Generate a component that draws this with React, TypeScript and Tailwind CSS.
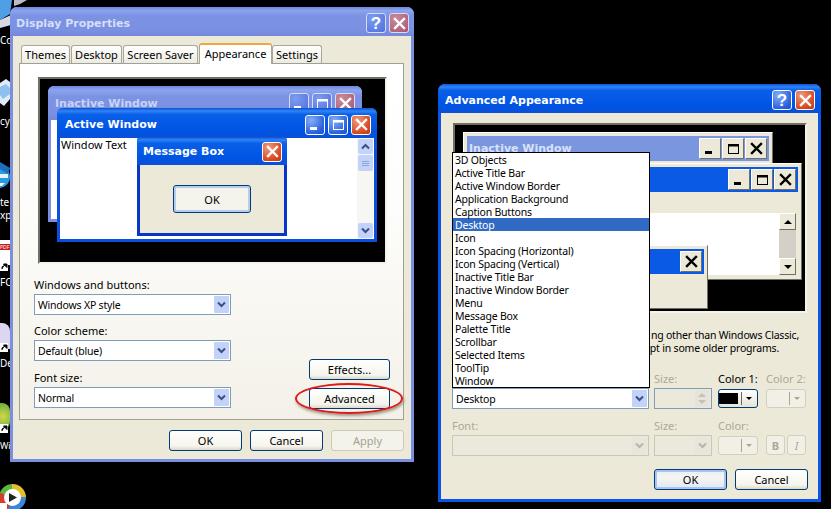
import React from "react";

const FONT = "font-['Noto_Sans',sans-serif] text-[11px] leading-[13px]";
const TIGHT = "text-[10.5px] tracking-[-0.2px]";
const TITLE = "font-['DejaVu_Sans',sans-serif] font-bold text-[11px] leading-[14px]";
const ACTIVE_BAR = "bg-[linear-gradient(180deg,#0a4fd4_0%,#2f85f5_10%,#0a5fe8_22%,#0054e3_75%,#0a50d8_100%)]";
const INACTIVE_BAR = "bg-[linear-gradient(180deg,#7186dc_0%,#8ba4ee_12%,#7c93e4_30%,#7a90e2_80%,#7488dc_100%)]";

function Glyph({ kind, color = "white" }: { kind: "x" | "min" | "max" | "help"; color?: string }) {
  if (kind === "x")
    return (
      <svg width="13" height="13" viewBox="0 0 13 13">
        <path d="M2 2 L11 11 M11 2 L2 11" stroke={color} strokeWidth="2.4" strokeLinecap="square" fill="none" />
      </svg>
    );
  if (kind === "min")
    return (
      <svg width="13" height="13" viewBox="0 0 13 13">
        <rect x="1" y="9" width="7" height="3" fill={color} />
      </svg>
    );
  if (kind === "max")
    return (
      <svg width="13" height="13" viewBox="0 0 13 13">
        <rect x="1.5" y="2.5" width="10" height="9" fill="none" stroke={color} strokeWidth="1" />
        <rect x="1" y="2" width="11" height="2.5" fill={color} />
      </svg>
    );
  return <span className="font-['Liberation_Sans',sans-serif] font-bold text-[17px] leading-none text-white">?</span>;
}

function CapBtn({ kind, red, faded }: { kind: "x" | "min" | "max" | "help"; red?: boolean; faded?: boolean }) {
  const cls = red
    ? faded
      ? "bg-[radial-gradient(circle_at_30%_25%,#c98b98,#a8566f)] border-[#d8dcf4]"
      : "bg-[radial-gradient(circle_at_30%_25%,#ee9a7c,#d8461c_70%,#c23a12)] border-white"
    : faded
      ? "bg-[radial-gradient(circle_at_30%_25%,#7d9cf0,#4f6fdc)] border-[#d8dcf4]"
      : "bg-[radial-gradient(circle_at_30%_25%,#86aef6,#2a62de_70%,#1c50cc)] border-white";
  return (
    <div className={`w-[20px] h-[20px] rounded-[3px] border flex items-center justify-center shrink-0 ${cls}`}>
      <Glyph kind={kind} />
    </div>
  );
}

function Btn({ children, w = "w-[73px]", disabled, focus }: { children: React.ReactNode; w?: string; disabled?: boolean; focus?: boolean }) {
  const cls = disabled
    ? "border-[#cdcab9] text-[#a5a292] bg-[#f4f3ea]"
    : focus
      ? "border-[#003c74] text-black bg-[linear-gradient(180deg,#e6eefc_0%,#f6f5ef_40%,#dfe6f6_100%)] shadow-[inset_0_0_0_2px_#a9c4f0]"
      : "border-[#003c74] text-black bg-[linear-gradient(180deg,#ffffff_0%,#f5f4ec_80%,#dcd8ca_100%)]";
  return <div className={`${w} h-[21px] shrink-0 rounded-[3px] border flex items-center justify-center ${cls}`}>{children}</div>;
}

function Chevron({ disabled }: { disabled?: boolean }) {
  return (
    <div className={`w-[15px] h-[17px] shrink-0 flex items-center justify-center rounded-[1px] ${disabled ? "bg-[#e8e6da]" : "bg-[#c3d2f8]"}`}>
      <svg width="9" height="7" viewBox="0 0 9 7">
        <path d="M1 1.5 L4.5 5 L8 1.5" fill="none" stroke={disabled ? "#b8b5a6" : "#3a4f86"} strokeWidth="2" />
      </svg>
    </div>
  );
}

function Select({ value, w = "w-[197px]", disabled }: { value?: string; w?: string; disabled?: boolean }) {
  return (
    <div className={`${w} h-[21px] border flex items-center justify-between pl-[3px] pr-[1px] ${disabled ? "border-[#c9c7b8] bg-[#ebe8dc]" : "border-[#7f9db9] bg-white"}`}>
      <span className={`text-black pt-[2px] ${TIGHT}`}>{value}</span>
      <Chevron disabled={disabled} />
    </div>
  );
}

function ColorBtn({ swatch, disabled }: { swatch?: boolean; disabled?: boolean }) {
  return (
    <div className={`w-[40px] h-[19px] rounded-[3px] border flex items-center justify-end gap-[2px] pr-[3px] ${disabled ? "border-[#d2cfbf] bg-[#f2f0e6]" : "border-[#003c74] bg-[linear-gradient(180deg,#ffffff,#e6e3d6)]"}`}>
      {swatch && <div className="w-[21px] h-[11px] bg-black mr-[1px]" />}
      <div className={`w-px h-[13px] ${disabled ? "bg-[#a8a596]" : "bg-[#6b6a60]"}`} />
      <div className={`w-0 h-0 border-l-[3px] border-r-[3px] border-t-[3px] border-l-transparent border-r-transparent mx-[2px] ${disabled ? "border-t-[#a8a596]" : "border-t-black"}`} />
    </div>
  );
}

function ClassicBtn({ kind }: { kind: "x" | "min" | "max" }) {
  return (
    <div className="w-[22px] h-[21px] bg-[#ece9d8] border border-t-white border-l-white border-r-[#716f64] border-b-[#716f64] flex items-center justify-center">
      <Glyph kind={kind} color="black" />
    </div>
  );
}

function ShortcutArrow({ top }: { top: string }) {
  return (
    <div className={`absolute left-0 ${top} w-[8px] h-[9px] bg-white flex items-center justify-center`}>
      <svg width="7" height="7" viewBox="0 0 7 7"><path d="M1 6 L1 4 L4 2 M2.5 1 L6 1 L6 4.5 Z" fill="black" stroke="black" strokeWidth="1" /></svg>
    </div>
  );
}

function DesktopBits() {
  return (
    <div className="absolute left-0 top-0 w-[30px] h-[509px] overflow-hidden font-['Noto_Sans',sans-serif] text-[10px] leading-[13px] text-white">
      <svg className="absolute left-0 top-0" width="28" height="28" viewBox="0 0 28 28">
        <path d="M0 0 H12 L10 14 L0 20 Z" fill="#4f9fe6" />
        <path d="M14 0 H27 L20 4 L14 6 Z" fill="#b9bcc8" />
        <path d="M0 20 L11 15 V25 L0 28 Z" fill="#d8dae4" />
      </svg>
      <span className="absolute left-0 top-[34px]">Co</span>
      <svg className="absolute left-0 top-[79px]" width="10" height="28" viewBox="0 0 10 28">
        <path d="M0 4 L6 0 L10 3 V20 L4 27 L0 24 Z" fill="#dfeafa" />
        <path d="M0 8 L6 5 L10 9 V15 L3 20 L0 16 Z" fill="#8fc0ee" />
      </svg>
      <span className="absolute left-0 top-[115px]">cy</span>
      <svg className="absolute left-0 top-[162px]" width="10" height="30" viewBox="0 0 10 30">
        <circle cx="-1" cy="15" r="11" fill="#2a9ae0" />
        <path d="M0 0 L10 6 L8 12 L0 7 Z" fill="#1c6fc0" />
        <path d="M0 12 H8 V16 H0 Z M0 21 H5 L2 24 H0 Z" fill="#e8f4fc" />
      </svg>
      <span className="absolute left-0 top-[196px]">te</span>
      <span className="absolute left-0 top-[209px]">xp</span>
      <div className="absolute left-0 top-[240px] w-[10px] h-[25px] bg-white" />
      <div className="absolute left-0 top-[244px] w-[10px] h-[6px] bg-[#c81c1c] text-[5px] leading-[6px] overflow-hidden">PDF</div>
      <ShortcutArrow top="top-[262px]" />
      <span className="absolute left-0 top-[276px]">FC</span>
      <div className="absolute left-0 top-[323px] w-[10px] h-[26px] bg-[#dcd6f0] rounded-tr-[8px]" />
      <ShortcutArrow top="top-[343px]" />
      <span className="absolute left-0 top-[357px]">De</span>
      <div className="absolute left-0 top-[403px] w-[10px] h-[27px] bg-[radial-gradient(circle_at_30%_50%,#d4d84c,#5aa83c)] rounded-r-[8px]" />
      <ShortcutArrow top="top-[424px]" />
      <span className="absolute left-0 top-[439px] text-[9px]">Wi</span>
      <div className="absolute left-[-1px] top-[484px] w-[27px] h-[27px] rounded-full bg-[conic-gradient(#e4c02c_0deg,#e4c02c_90deg,#3a86dc_90deg,#3a86dc_200deg,#d83c2c_200deg,#d83c2c_290deg,#5cb83c_290deg)] flex items-center justify-center">
        <div className="w-[17px] h-[17px] rounded-full bg-white flex items-center justify-center">
          <svg width="11" height="11" viewBox="0 0 11 11"><path d="M2 1 L10 5.5 L2 10 Z" fill="#222" /></svg>
        </div>
      </div>
      <div className="absolute left-0 top-[503px] w-[7px] h-[6px] bg-white" />
    </div>
  );
}

function DisplayProperties() {
  const tabs = ["Themes", "Desktop", "Screen Saver"];
  return (
    <div className="absolute left-[10px] top-[7px] w-[404px] h-[455px] rounded-t-[7px] border-[3px] border-t-0 border-[#7b8fe0] bg-[#ece9d8] flex flex-col">
      <div className={`-mx-[3px] h-[29px] pt-[3px] rounded-t-[7px] flex items-center justify-between pl-[6px] pr-[5px] shrink-0 ${INACTIVE_BAR}`}>
        <span className={`${TITLE} text-[#d6def8] pt-[1px]`}>Display Properties</span>
        <div className="flex gap-[3px]">
          <CapBtn kind="help" faded />
          <CapBtn kind="x" red faded />
        </div>
      </div>
      <div className="flex items-end pl-[8px] h-[27px] shrink-0">
        {tabs.map((t, i) => (
          <div key={t} className={`h-[18px] border border-b-0 border-[#a8a79a] rounded-t-[3px] bg-[linear-gradient(180deg,#ffffff,#ecebe2)] flex items-center justify-center text-black mr-[1px] ${i === 0 ? "w-[49px]" : i === 1 ? "w-[51px]" : "w-[75px]"}`}>
            {t}
          </div>
        ))}
        <div className="w-[73px] h-[21px] border border-b-0 border-[#a8a79a] border-t-[2px] border-t-[#f0a83c] rounded-t-[3px] bg-white flex items-center justify-center text-black -mb-px relative pb-[2px]">
          Appearance
        </div>
        <div className="w-[50px] h-[18px] border border-b-0 border-[#a8a79a] rounded-t-[3px] bg-[linear-gradient(180deg,#ffffff,#ecebe2)] flex items-center justify-center text-black">
          Settings
        </div>
      </div>
      <div className="ml-[6px] w-[385px] h-[357px] border border-[#a0a094] bg-[linear-gradient(180deg,#ffffff_0%,#fdfdfb_40%,#f3f1e8_100%)] pt-[13px] pl-[18px] shrink-0">
        <div className="relative w-[349px] h-[187px] bg-black border-2 border-t-[#716f64] border-l-[#716f64] border-r-[#f5f3ea] border-b-[#f5f3ea] overflow-hidden">
          <div className="absolute left-[8px] top-[7px] w-[314px] h-[136px] rounded-t-[6px] border-[3px] border-t-0 border-[#7b8fe0] bg-white">
            <div className={`-mx-[3px] h-[34px] rounded-t-[6px] flex items-center justify-between pl-[7px] pr-[7px] ${INACTIVE_BAR}`}>
              <span className={`${TITLE} text-[#c8d4f6] pt-[1px]`}>Inactive Window</span>
              <div className="flex gap-[3px]">
                <CapBtn kind="min" faded />
                <CapBtn kind="max" faded />
                <CapBtn kind="x" red faded />
              </div>
            </div>
          </div>
          <div className="absolute left-[17px] top-[29px] w-[320px] h-[134px] rounded-t-[6px] border-[3px] border-t-0 border-[#0a4fe0] bg-white flex flex-col">
            <div className={`-mx-[3px] h-[30px] pt-[3px] rounded-t-[6px] flex items-center justify-between pl-[8px] pr-[6px] shrink-0 ${ACTIVE_BAR}`}>
              <span className={`${TITLE} text-white pt-[1px]`}>Active Window</span>
              <div className="flex gap-[3px]">
                <CapBtn kind="min" />
                <CapBtn kind="max" />
                <CapBtn kind="x" red />
              </div>
            </div>
            <div className="flex flex-1 justify-between">
              <span className="text-black pl-px">Window Text</span>
              <div className="w-[16px] bg-[#f6f6f2] flex flex-col items-center mr-px pt-px pb-px">
                <div className="w-[15px] h-[15px] bg-[#c3d2f8] rounded-[2px] flex items-center justify-center">
                  <svg width="9" height="7" viewBox="0 0 9 7"><path d="M1 5.5 L4.5 2 L8 5.5" fill="none" stroke="#3a4f86" strokeWidth="2" /></svg>
                </div>
                <div className="w-[15px] h-[16px] bg-[#c3d2f8] rounded-[2px] mt-px flex flex-col items-center justify-center gap-px">
                  <div className="w-[7px] h-px bg-[#8ea4dc]" /><div className="w-[7px] h-px bg-[#8ea4dc]" /><div className="w-[7px] h-px bg-[#8ea4dc]" />
                </div>
                <div className="flex-1" />
                <div className="w-[15px] h-[15px] bg-[#c3d2f8] rounded-[2px] flex items-center justify-center">
                  <svg width="9" height="7" viewBox="0 0 9 7"><path d="M1 1.5 L4.5 5 L8 1.5" fill="none" stroke="#3a4f86" strokeWidth="2" /></svg>
                </div>
              </div>
            </div>
          </div>
          <div className="absolute left-[97px] top-[58px] w-[150px] h-[99px] rounded-t-[4px] border-[3px] border-t-0 border-[#0a35c8] bg-[#ece9d8] flex flex-col">
            <div className={`-mx-[3px] h-[28px] pt-[1px] rounded-t-[4px] flex items-center justify-between pl-[6px] pr-[5px] shrink-0 ${ACTIVE_BAR}`}>
              <span className={`${TITLE} text-white pt-[1px]`}>Message Box</span>
              <CapBtn kind="x" red />
            </div>
            <div className="flex-1 flex items-center justify-center">
              <div className="w-[78px] h-[28px] rounded-[3px] border border-[#003c74] shadow-[inset_0_0_0_2px_#b6ccf0] bg-[#f4f3ec] flex items-center justify-center text-black">OK</div>
            </div>
          </div>
        </div>
        <div className="flex mt-[16px] -ml-[4px] w-[356px] justify-between">
          <div className="flex flex-col">
            <span className="text-black h-[14px] leading-[9px]">Windows and buttons:</span>
            <Select value="Windows XP style" />
            <span className="text-black h-[14px] mt-[11px] leading-[9px]">Color scheme:</span>
            <Select value="Default (blue)" />
            <span className="text-black h-[14px] mt-[12px] leading-[9px]">Font size:</span>
            <Select value="Normal" />
          </div>
          <div className="flex flex-col justify-end gap-[8px] -mb-[1px]">
            <Btn w="w-[81px]">Effects...</Btn>
            <div className="relative">
              <Btn w="w-[81px]">Advanced</Btn>
              <div className="absolute left-[-14px] top-[-5px] w-[108px] h-[31px] rounded-[50%] border-2 border-[#e01818] shadow-[1px_2px_3px_#9b9888]" />
            </div>
          </div>
        </div>
      </div>
      <div className="flex justify-end gap-[8px] pr-[7px] pt-[10px]">
        <Btn>OK</Btn>
        <Btn>Cancel</Btn>
        <Btn disabled>Apply</Btn>
      </div>
    </div>
  );
}

const ITEMS = ["3D Objects", "Active Title Bar", "Active Window Border", "Application Background", "Caption Buttons", "Desktop", "Icon", "Icon Spacing (Horizontal)", "Icon Spacing (Vertical)", "Inactive Title Bar", "Inactive Window Border", "Menu", "Message Box", "Palette Title", "Scrollbar", "Selected Items", "ToolTip", "Window"];

function AdvancedAppearance() {
  return (
    <div className="absolute left-[438px] top-[84px] w-[383px] h-[418px] rounded-t-[7px] border-[3px] border-t-0 border-[#0a55e8] bg-[#ece9d8] flex flex-col">
      <div className={`-mx-[3px] h-[29px] pt-[3px] rounded-t-[7px] flex items-center justify-between pl-[7px] pr-[6px] shrink-0 ${ACTIVE_BAR}`}>
        <span className={`${TITLE} text-white pt-[1px]`}>Advanced Appearance</span>
        <div className="flex gap-[3px]">
          <CapBtn kind="help" />
          <CapBtn kind="x" red />
        </div>
      </div>
      <div className="relative px-[11px] pt-[10px] flex-1 flex flex-col">
        <div className="relative w-[354px] h-[190px] ml-[1px] shrink-0 bg-black border-2 border-t-[#716f64] border-l-[#716f64] border-r-[#f5f3ea] border-b-[#f5f3ea] overflow-hidden">
          <div className="absolute left-[8px] top-[7px] w-[310px] h-[120px] bg-[#ece9d8] border border-t-white border-l-white border-r-[#716f64] border-b-[#716f64] p-[3px]">
            <div className="h-[25px] bg-[#7a96df] flex items-center justify-between pl-[2px] pr-[2px]">
              <span className={`${TITLE} text-[#d8e2f8]`}>Inactive Window</span>
              <div className="flex gap-[1px]"><ClassicBtn kind="min" /><ClassicBtn kind="max" /><ClassicBtn kind="x" /></div>
            </div>
          </div>
          <div className="absolute left-[30px] top-[38px] w-[317px] h-[117px] bg-[#ece9d8] border border-t-white border-l-white border-r-[#716f64] border-b-[#716f64] p-[3px]">
            <div className="h-[25px] bg-[#0a5ae6] flex items-center justify-end pr-[2px]">
              <div className="flex gap-[1px]"><ClassicBtn kind="min" /><ClassicBtn kind="max" /><ClassicBtn kind="x" /></div>
            </div>
            <div className="mt-[21px] mr-[2px] h-[62px] bg-white flex justify-end">
              <div className="w-[17px] h-full bg-[#d4d0c8] flex flex-col justify-between">
                <div className="h-[17px] bg-[#ece9d8] border border-t-white border-l-white border-r-[#716f64] border-b-[#716f64] flex items-center justify-center">
                  <div className="w-0 h-0 border-l-[4px] border-r-[4px] border-b-[4px] border-l-transparent border-r-transparent border-b-black" />
                </div>
                <div className="h-[17px] bg-[#ece9d8] border border-t-white border-l-white border-r-[#716f64] border-b-[#716f64] flex items-center justify-center">
                  <div className="w-0 h-0 border-l-[4px] border-r-[4px] border-t-[4px] border-l-transparent border-r-transparent border-t-black" />
                </div>
              </div>
            </div>
          </div>
          <div className="absolute left-[100px] top-[120px] w-[153px] h-[64px] bg-[#ece9d8] border border-t-white border-l-white border-r-[#716f64] border-b-[#716f64] p-[3px]">
            <div className="h-[25px] bg-[#0a5ae6] flex items-center justify-end pr-[2px]"><ClassicBtn kind="x" /></div>
          </div>
        </div>
        <div className={`mt-[16px] text-black whitespace-nowrap flex justify-end pr-[8px] ${TIGHT}`}>ng other than Windows Classic,</div>
        <div className={`text-black whitespace-nowrap flex justify-end pr-[28px] ${TIGHT}`}>ept in some older programs.</div>

        <div className="flex mt-[33px] gap-[5px]">
          <div className="w-[197px]">
            <Select value="Desktop" />
          </div>
          <div className="w-[58px] -mt-[16px]">
            <div className="h-[13px] text-[#aca899]">Size:</div>
            <div className="mt-[3px] h-[21px] border border-[#7f9db9] bg-[#ebe8dc] flex items-center justify-end pr-[2px]">
              <div className="w-[14px] h-[17px] bg-[#e6e4da] flex flex-col items-center justify-center gap-[3px]">
                <div className="w-0 h-0 border-l-[4px] border-r-[4px] border-b-[4px] border-l-transparent border-r-transparent border-b-[#c5c2b4]" />
                <div className="w-0 h-0 border-l-[4px] border-r-[4px] border-t-[4px] border-l-transparent border-r-transparent border-t-[#c5c2b4]" />
              </div>
            </div>
          </div>
          <div className="w-[43px] ml-[1px] -mt-[16px]">
            <div className="h-[13px] text-black whitespace-nowrap">Color 1:</div>
            <div className="mt-[4px]"><ColorBtn swatch /></div>
          </div>
          <div className="w-[41px] -mt-[16px]">
            <div className="h-[13px] text-[#aca899] whitespace-nowrap">Color 2:</div>
            <div className="mt-[4px]"><ColorBtn disabled /></div>
          </div>
        </div>

        <div className="flex mt-[10px] gap-[5px]">
          <div className="w-[197px]">
            <div className="h-[13px] text-[#aca899]">Font:</div>
            <div className="mt-[3px]"><Select disabled /></div>
          </div>
          <div className="w-[58px]">
            <div className="h-[13px] text-[#aca899]">Size:</div>
            <div className="mt-[3px]"><Select disabled w="w-[58px]" /></div>
          </div>
          <div className="w-[43px] ml-[1px]">
            <div className="h-[13px] text-[#aca899]">Color:</div>
            <div className="mt-[4px]"><ColorBtn disabled /></div>
          </div>
          <div className="w-[41px] flex gap-[2px] pt-[16px]">
            <div className="w-[19px] h-[20px] shrink-0 rounded-[3px] border border-[#d2cfbf] bg-[#f2f0e6] flex items-center justify-center font-bold text-[#aca899]">B</div>
            <div className="w-[19px] h-[20px] shrink-0 rounded-[3px] border border-[#d2cfbf] bg-[#f2f0e6] flex items-center justify-center italic text-[#aca899]">I</div>
          </div>
        </div>

        <div className="flex justify-end gap-[8px] mt-[13px] -mr-[1px]">
          <Btn focus>OK</Btn>
          <Btn>Cancel</Btn>
        </div>

        <div className={`absolute left-[11px] top-[39px] w-[198px] bg-white border border-black ${TIGHT}`}>
          {ITEMS.map((it) => (
            <div key={it} className={`h-[13px] pl-[2px] leading-[15px] ${it === "Desktop" ? "bg-[#316ac5] text-white" : "text-black"}`}>{it}</div>
          ))}
        </div>
      </div>
    </div>
  );
}

export default function App() {
  return (
    <div className={`relative w-[831px] h-[509px] bg-black overflow-hidden ${FONT}`}>
      <DesktopBits />
      <DisplayProperties />
      <AdvancedAppearance />
    </div>
  );
}
